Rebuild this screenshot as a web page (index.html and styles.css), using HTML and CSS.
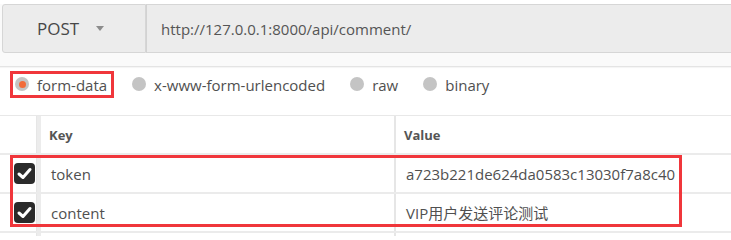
FILE: index.html
```html
<!DOCTYPE html>
<html>
<head>
<meta charset="utf-8">
<link rel="stylesheet" href="styles.css">
</head>
<body>
<div class="page">
  <div class="topbar">
    <div class="request">
      <div class="method"><span class="method-name">POST</span><span class="caret"></span></div>
      <div class="url">http://127.0.0.1:8000/api/comment/</div>
    </div>
  </div>

  <div class="body-types">
    <label class="radio-item"><span class="radio checked"></span><span>form-data</span></label>
    <label class="radio-item"><span class="radio"></span><span>x-www-form-urlencoded</span></label>
    <label class="radio-item"><span class="radio"></span><span>raw</span></label>
    <label class="radio-item"><span class="radio"></span><span>binary</span></label>
  </div>

  <div class="table">
    <div class="row head">
      <div class="c-check"></div>
      <div class="c-handle"></div>
      <div class="c-key">Key</div>
      <div class="c-value">Value</div>
    </div>
    <div class="row">
      <div class="c-check"><span class="checkbox"><svg viewBox="0 0 21 21" width="21" height="21"><path d="M5 11 L9 14.5 L16 6.5" fill="none" stroke="#fff" stroke-width="3" stroke-linecap="round" stroke-linejoin="round"/></svg></span></div>
      <div class="c-handle"></div>
      <div class="c-key">token</div>
      <div class="c-value">a723b221de624da0583c13030f7a8c40</div>
    </div>
    <div class="row">
      <div class="c-check"><span class="checkbox"><svg viewBox="0 0 21 21" width="21" height="21"><path d="M5 11 L9 14.5 L16 6.5" fill="none" stroke="#fff" stroke-width="3" stroke-linecap="round" stroke-linejoin="round"/></svg></span></div>
      <div class="c-handle"></div>
      <div class="c-key">content</div>
      <div class="c-value">VIP用户发送评论测试</div>
    </div>
    <div class="row empty">
      <div class="c-check"></div>
      <div class="c-handle"></div>
      <div class="c-key"></div>
      <div class="c-value"></div>
    </div>
  </div>

  <div class="mark mark-radio"></div>
  <div class="mark mark-rows"></div>
</div>
</body>
</html>
```

FILE: styles.css
```css
html, body {
  margin: 0;
  padding: 0;
  background: #ffffff;
}
body {
  font-family: "Open Sans", "Noto Sans CJK SC", sans-serif;
  color: #505050;
  overflow: hidden;
}
.page {
  position: relative;
  width: 731px;
  height: 236px;
  overflow: hidden;
}
.topbar {
  height: 62px;
  padding-top: 4px;
  padding-left: 2px;
  background: linear-gradient(#ffffff 0, #ffffff 4px, #fafafa 4px);
  border-bottom: 1px solid #e4e4e4;
  box-shadow: 0 1px 1px rgba(0, 0, 0, 0.04);
}
.request {
  display: flex;
  height: 49px;
}
.method {
  width: 144px;
  box-sizing: border-box;
  display: flex;
  align-items: center;
  padding-left: 34px;
  background: #ececec;
  border: 1px solid #d6d6d6;
  border-radius: 3px 0 0 3px;
}
.method-name {
  font-size: 17px;
  font-weight: 500;
  color: #474747;
}
.caret {
  margin-left: 17px;
  width: 0;
  height: 0;
  border-left: 4px solid transparent;
  border-right: 4px solid transparent;
  border-top: 5px solid #8c8c8c;
}
.url {
  flex: 1;
  display: flex;
  align-items: center;
  padding-left: 14px;
  font-size: 15px;
  color: #555555;
  background: #ececec;
  border-top: 1px solid #d6d6d6;
  border-bottom: 1px solid #d6d6d6;
  border-left: 1px solid #d2d2d2;
}
.body-types {
  height: 36px;
  padding-bottom: 12px;
  display: flex;
  align-items: center;
  padding-left: 15px;
  gap: 25px;
  font-size: 15px;
  color: #505050;
}
.radio-item {
  display: flex;
  align-items: center;
  gap: 8px;
}
.radio {
  width: 14px;
  height: 14px;
  border-radius: 50%;
  background: #c4c4c4;
  display: flex;
  align-items: center;
  justify-content: center;
  margin-top: -2px;
}
.radio.checked::after {
  content: "";
  width: 7px;
  height: 7px;
  border-radius: 50%;
  background: #f26b3a;
}
.table {
  border-top: 1px solid #e8e8e8;
}
.row {
  display: flex;
  height: 37px;
  border-bottom: 2px solid #ebebeb;
  font-size: 15px;
}
.row.head {
  height: 37px;
  font-size: 13px;
  font-weight: 700;
  color: #555555;
}
.c-check {
  width: 37px;
  display: flex;
  align-items: center;
  padding-left: 14px;
  box-sizing: border-box;
  border-right: 1px solid #e6e6e6;
}
.c-handle {
  width: 4px;
  background: #ececec;
}
.c-key {
  width: 355px;
  display: flex;
  align-items: center;
  padding-left: 10px;
  box-sizing: border-box;
  border-right: 2px solid #e6e6e6;
}
.head .c-key {
  padding-left: 8px;
}
.c-value {
  flex: 1;
  display: flex;
  align-items: center;
  padding-left: 10px;
}
.head .c-value {
  padding-left: 8px;
}
.checkbox {
  width: 21px;
  height: 21px;
  border-radius: 4px;
  background: #2b2b2b;
  display: block;
}
.checkbox svg {
  display: block;
}
.mark {
  position: absolute;
  border: 3px solid #f0363b;
  box-sizing: border-box;
}
.mark-radio {
  left: 10px;
  top: 71px;
  width: 104px;
  height: 27px;
}
.mark-rows {
  left: 10px;
  top: 155px;
  width: 672px;
  height: 72px;
}
```
